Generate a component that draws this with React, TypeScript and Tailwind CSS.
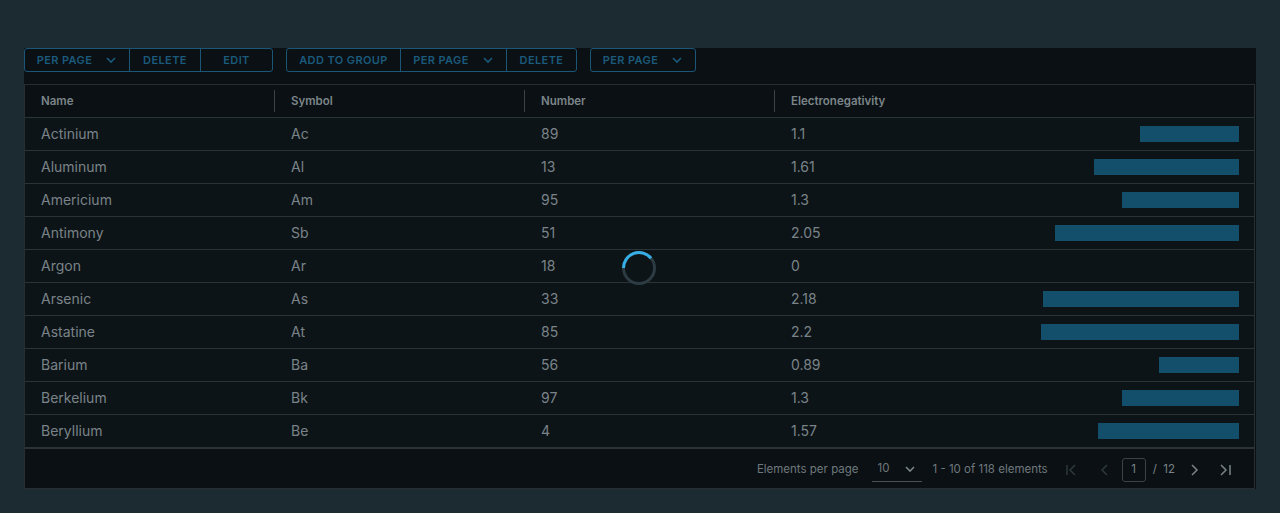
import React from "react";

const rows: [string, string, number, number][] = [
  ["Actinium", "Ac", 89, 1.1],
  ["Aluminum", "Al", 13, 1.61],
  ["Americium", "Am", 95, 1.3],
  ["Antimony", "Sb", 51, 2.05],
  ["Argon", "Ar", 18, 0],
  ["Arsenic", "As", 33, 2.18],
  ["Astatine", "At", 85, 2.2],
  ["Barium", "Ba", 56, 0.89],
  ["Berkelium", "Bk", 97, 1.3],
  ["Beryllium", "Be", 4, 1.57],
];

const Chevron = () => (
  <svg width="12" height="12" viewBox="0 0 12 12" fill="none" stroke="currentColor" strokeWidth="1.6">
    <path d="M2 4l4 4 4-4" />
  </svg>
);

const Btn = ({ label, chevron, w, last }: { label: string; chevron?: boolean; w: string; last?: boolean }) => (
  <div
    className={`flex h-full items-center justify-center gap-[13px] ${w} ${last ? "" : "border-r border-[#1b5676]"} text-[11px] font-semibold tracking-[0.4px] text-[#1b5a7c]`}
  >
    <span>{label}</span>
    {chevron && <Chevron />}
  </div>
);

const Group = ({ children }: { children: React.ReactNode }) => (
  <div className="flex h-[24px] items-stretch rounded-[3px] border border-[#1b5676]">{children}</div>
);

export default function App() {
  return (
    <div
      className="h-[513px] w-[1280px] bg-[#1c2a31] pt-[48px] pl-[24px]"
      style={{ fontFamily: "Inter, 'Noto Sans', sans-serif" }}
    >
      <div className="relative w-[1232px] bg-[#0a1013]">
        <div className="flex h-[36px] items-start gap-[13px]">
          <Group>
            <Btn label="PER PAGE" chevron w="w-[105px]" />
            <Btn label="DELETE" w="w-[71px]" />
            <Btn label="EDIT" w="w-[71px]" last />
          </Group>
          <Group>
            <Btn label="ADD TO GROUP" w="w-[114px]" />
            <Btn label="PER PAGE" chevron w="w-[106px]" />
            <Btn label="DELETE" w="w-[69px]" last />
          </Group>
          <Group>
            <Btn label="PER PAGE" chevron w="w-[104px]" last />
          </Group>
        </div>
        <div className="w-[1231px] border border-[#262e32]">
          <div className="flex h-[33px] items-center border-b border-[#2a3337] bg-[#0a1013] text-[11.5px] font-semibold text-[#7c858a]">
            {["Name", "Symbol", "Number", "Electronegativity"].map((h, i) => (
              <div
                key={h}
                className={`flex h-full items-center ${i === 3 ? "flex-1" : i === 0 ? "w-[249px]" : "w-[250px]"}`}
              >
                {i > 0 && <div className="h-[22px] w-px bg-[#3a4347]" />}
                <span className="pl-[16px] pt-[2px]">{h}</span>
              </div>
            ))}
          </div>
          {rows.map(([n, s, num, e], idx) => (
            <div
              key={n}
              className={`flex items-center bg-[#0d1417] pb-px text-[14px] text-[#7a8389] ${idx < rows.length - 1 ? "h-[33px] border-b border-[#2a3337]" : "h-[34px] border-b-[2px] border-[#2a3337]"}`}
            >
              <div className="w-[249px] pl-[16px]">{n}</div>
              <div className="w-[250px] pl-[17px]">{s}</div>
              <div className="w-[250px] pl-[17px]">{num}</div>
              <div className="flex flex-1 items-center pl-[17px] pr-[15px]">
                <span className="flex-1">{e}</span>
                {e > 0 && <div className="h-[16px] bg-[#134f6b]" style={{ width: `${Math.round(e * 90)}px` }} />}
              </div>
            </div>
          ))}
          <div className="flex h-[39px] items-center justify-end bg-[#0a1013] pt-[2px] pr-[22px] text-[11.5px] text-[#6f787d]">
            <span>Elements per page</span>
            <div className="ml-[13px] flex h-[24px] w-[50px] items-center justify-between border-b border-[#4a5357] pl-[6px] pr-[6px] text-[#6f787d]">
              <span>10</span>
              <span className="text-[#7a8389]"><Chevron /></span>
            </div>
            <span className="ml-[11px]">1 - 10 of 118 elements</span>
            <div className="ml-[17px] flex items-center text-[#2e393e]">
              <svg width="14" height="14" viewBox="0 0 14 14" fill="none" stroke="currentColor" strokeWidth="1.5">
                <path d="M2 2v10M10 2l-5 5 5 5" />
              </svg>
            </div>
            <div className="ml-[21px] flex items-center text-[#2e393e]">
              <svg width="10" height="14" viewBox="0 0 10 14" fill="none" stroke="currentColor" strokeWidth="1.5">
                <path d="M7 2l-5 5 5 5" />
              </svg>
            </div>
            <div className="ml-[12px] flex h-[24px] w-[24px] items-center justify-center rounded-[3px] border border-[#3a4347] text-[#7a8389]">
              1
            </div>
            <span className="ml-[7px] text-[#7a8389]">/&nbsp;&nbsp;12</span>
            <div className="ml-[14px] flex items-center text-[#7a8389]">
              <svg width="10" height="14" viewBox="0 0 10 14" fill="none" stroke="currentColor" strokeWidth="1.5">
                <path d="M3 2l5 5-5 5" />
              </svg>
            </div>
            <div className="ml-[19px] flex items-center text-[#7a8389]">
              <svg width="14" height="14" viewBox="0 0 14 14" fill="none" stroke="currentColor" strokeWidth="1.5">
                <path d="M3 2l5 5-5 5M12 2v10" />
              </svg>
            </div>
          </div>
        </div>
        <div className="absolute left-[597px] top-[202px]">
          <svg width="36" height="36" viewBox="0 0 36 36">
            <circle cx="18" cy="18" r="15.5" fill="none" stroke="#2d3b42" strokeWidth="3" />
            <path d="M2.5 18 A15.5 15.5 0 0 1 30 8.2" fill="none" stroke="#36aee6" strokeWidth="3" />
          </svg>
        </div>
      </div>
    </div>
  );
}
